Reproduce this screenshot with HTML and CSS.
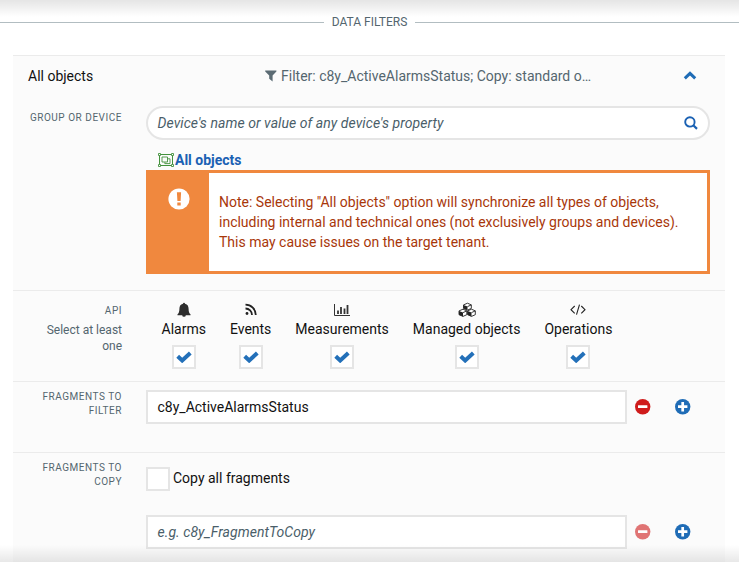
FILE: index.html
```html
<!DOCTYPE html>
<html lang="en">
<head>
<meta charset="utf-8">
<title>Data filters</title>
<link rel="stylesheet" href="styles.css">
</head>
<body>
<svg class="defs" aria-hidden="true">
  <symbol id="check" viewBox="0 0 16 12"><path d="M1.700 5.200L6.200 9.500L14.300 2" fill="none" stroke="#2370b9" stroke-width="4"/></symbol>
  <symbol id="minus" viewBox="0 0 16 16"><circle cx="7.700" cy="7.700" r="7.700" fill="#cf1c1c"/><rect x="3" y="6.200" width="9.400" height="2.900" rx=".4" fill="#fff"/></symbol>
  <symbol id="plus" viewBox="0 0 16 16"><circle cx="7.700" cy="7.700" r="7.700" fill="#1f6cb6"/><path d="M7.700 3v9.400M3 7.700h9.400" stroke="#fff" stroke-width="2.700"/></symbol>
</svg>
<main class="page">
  <h1 class="divider"><span>DATA FILTERS</span></h1>
  <div class="card">
    <section class="group">
      <header class="head">
        <span class="title">All objects</span>
        <svg class="funnel" viewBox="0 0 12 12"><path d="M.2.5H11.4V1.6L7.6 5.6V11.6L4.2 8.8V5.6L.2 1.6Z" fill="#5b6b73"/></svg>
        <span class="summary">Filter: c8y_ActiveAlarmsStatus; Copy: standard o…</span>
        <svg class="chevron" viewBox="0 0 14 9"><path d="M1.800 7.300L7 2.300L12.200 7.300" fill="none" stroke="#1f6cb6" stroke-width="3"/></svg>
      </header>
      <div class="row">
        <div class="label">GROUP OR DEVICE</div>
        <div class="content">
          <div class="search"><span>Device's name or value of any device's property</span>
            <svg viewBox="0 0 14 14"><circle cx="5.900" cy="5.900" r="4.700" fill="none" stroke="#1a61b3" stroke-width="1.900"/><path d="M9.300 9.300L13 12.900" stroke="#1a61b3" stroke-width="2.200"/></svg>
          </div>
          <div class="picked">
            <svg viewBox="0 0 16 14" fill="none" stroke="#43913c"><path d="M2.500 1.500h11M2.500 12.500h11M1.500 2.500v9M14.500 2.500v9"/><path d="M4 4h5.500v5H4zM6.800 9.300v1.300H12V5.800H9.800" stroke-width=".9"/><path d="M.5.5h2v2h-2zM13.500.5h2v2h-2zM.5 11.500h2v2h-2zM13.500 11.500h2v2h-2z" fill="#fff" stroke-width=".9"/></svg>
            <strong>All objects</strong>
          </div>
          <div class="alert">
            <div class="alert-icon"><svg viewBox="0 0 22 22"><circle cx="11" cy="11" r="10.600" fill="#fff"/><path d="M8.900 4.200h4.200l-.5 8.700H9.400zM9.300 14.500h3.400v3H9.300z" fill="#f0883e"/></svg></div>
            <p>Note: Selecting "All objects" option will synchronize all types of objects,<br>including internal and technical ones (not exclusively groups and devices).<br>This may cause issues on the target tenant.</p>
          </div>
        </div>
      </div>
    </section>
    <section class="row api">
      <div class="label">API<p>Select at least one</p></div>
      <div class="apis">
        <div class="item"><svg viewBox="0 0 18 16"><path d="M9 .8a1 1 0 0 1 1 1C12.700 2.300 13.600 4.500 13.600 7c0 2.800.6 4.200 1.900 5.300v.9h-13v-.9C3.800 11.200 4.400 9.800 4.400 7 4.400 4.500 5.300 2.300 8 1.800a1 1 0 0 1 1-1zM7.200 13.200h3.600a1.800 1.600 0 0 1-3.600 0z" fill="#2d2d2d"/></svg><span>Alarms</span><i class="box"><svg><use href="#check"/></svg></i></div>
        <div class="item"><svg viewBox="0 0 18 16"><circle cx="5" cy="11.500" r="1.400" fill="#222"/><path d="M3.500 6.500a6.500 6.500 0 0 1 6.500 6.500M3.500 2.700a10.300 10.300 0 0 1 10.300 10.300" fill="none" stroke="#222" stroke-width="1.800"/></svg><span>Events</span><i class="box"><svg><use href="#check"/></svg></i></div>
        <div class="item"><svg viewBox="0 0 18 16"><path d="M1.500 2v11.500H17" fill="none" stroke="#333"/><path d="M5 8.500v3.500M8 5v7M11.500 6.500v5.500M14.500 3v9" stroke="#333" stroke-width="1.800"/></svg><span>Measurements</span><i class="box"><svg><use href="#check"/></svg></i></div>
        <div class="item"><svg viewBox="0 0 18 16"><g fill="#fff" stroke="#222" stroke-width=".9"><path d="M5.500 2.900L9.500 1.200L13.300 2.900V6.400L9.500 8.100L5.500 6.400Z"/><path d="M1 8.900L5 7.200L8.800 8.900V12.700L5 14.400L1 12.700ZM9.600 8.900L13.500 7.200L17.300 8.900V12.700L13.500 14.400L9.600 12.700Z"/></g><path d="M5.500 2.900L9.500 4.600V8.100L5.500 6.400ZM1 8.900L5 10.600V14.400L1 12.700ZM9.600 8.900L13.500 10.600V14.400L9.600 12.700Z" fill="#222"/><path d="M9.500 4.600L13.300 2.900M5 10.600L8.800 8.900M13.500 10.600L17.300 8.900" stroke="#222" stroke-width=".9"/></svg><span>Managed objects</span><i class="box"><svg><use href="#check"/></svg></i></div>
        <div class="item"><svg viewBox="0 0 18 16"><path d="M5.700 4L2 7.700L5.700 11.400M12.300 4L16 7.700L12.300 11.400M10.500 2.700L7.500 12.700" fill="none" stroke="#222" stroke-width="1.100"/></svg><span>Operations</span><i class="box"><svg><use href="#check"/></svg></i></div>
      </div>
    </section>
    <section class="row filter">
      <div class="label">FRAGMENTS TO FILTER</div>
      <div class="line"><div class="input">c8y_ActiveAlarmsStatus</div><svg class="btn"><use href="#minus"/></svg><svg class="btn"><use href="#plus"/></svg></div>
    </section>
    <section class="row copy">
      <div class="label">FRAGMENTS TO COPY</div>
      <div class="content">
        <div class="option"><i class="box"></i><span>Copy all fragments</span></div>
        <div class="line"><div class="input placeholder">e.g. c8y_FragmentToCopy</div><svg class="btn disabled"><use href="#minus"/></svg><svg class="btn"><use href="#plus"/></svg></div>
      </div>
    </section>
  </div>
</main>
</body>
</html>
```
FILE: styles.css
```css
* { box-sizing: border-box; }
body { margin: 0; background: #fff; color: #111; font: 14px/20px Roboto, "Liberation Sans", sans-serif; }
p, h1 { margin: 0; }
svg { display: block; flex: none; }
.defs { position: absolute; width: 0; height: 0; }
.page { position: relative; height: 562px; overflow: hidden; }
.page::before, .page::after { content: ""; position: absolute; z-index: 2; left: 0; right: 0; height: 17px; pointer-events: none; }
.page::before { top: 0; background: linear-gradient(rgba(0,0,0,.1), rgba(0,0,0,0)); }
.page::after { bottom: 0; background: linear-gradient(rgba(0,0,0,0), rgba(0,0,0,.09)); }
.divider { display: flex; align-items: center; gap: 8px; height: 20px; margin: 12px 0 23px; padding-right: 1px; font-size: 12px; font-weight: 400; color: #54666f; }
.divider::before, .divider::after { content: ""; flex: 1; height: 1px; background: #b2bdc1; }
.divider::after { margin-right: -1px; }
.card { width: 712px; margin-left: 13px; background: #fbfbfb; }
.group, .row.api, .row.filter, .row.copy { border-top: 1px solid #ebebeb; }
.group { height: 235px; }
.head { display: flex; align-items: center; height: 40px; padding-left: 15px; }
.title { width: 237px; }
.funnel { width: 12px; height: 12px; margin-right: 4px; }
.summary { width: 312px; white-space: nowrap; color: #54666f; }
.chevron { width: 14px; height: 9px; margin: -2px 0 0 90px; }
.row { display: grid; grid-template-columns: 109px 564px; column-gap: 24px; }
.label { text-align: right; font-size: 10px; line-height: 14px; letter-spacing: .53px; color: #54666f; padding: 8px 0 0 24px; }
.group .label { padding: 13px 0 0; }
.group .row { padding-top: 2px; }
.group .content { margin-top: 8px; }
.search { display: flex; align-items: center; justify-content: space-between; height: 34px; border: 2px solid #e5e5e5; border-radius: 17px; background: #fff; padding: 0 10px 0 9.5px; font-style: italic; letter-spacing: .06px; color: #4a5e69; }
.search svg { width: 14px; height: 14px; }
.picked { display: flex; align-items: center; gap: 1px; height: 20px; margin: 10px 0 0 12px; color: #1a61b3; }
.picked svg { width: 16px; height: 14px; }
.picked strong { font-weight: 700; }
.alert { display: flex; height: 104px; border: 3px solid #f0883e; background: #fff; color: #a8370a; }
.alert-icon { width: 60px; background: #f0883e; padding: 15px 0 0 18.5px; }
.alert-icon svg { width: 22px; height: 22px; }
.alert p { padding: 19px 0 0 10px; white-space: nowrap; }
.api { height: 91px; }
.api .label { padding: 13px 0 0 20px; }
.label p { margin-top: 4px; font-size: 12px; line-height: 16px; letter-spacing: 0; }
.apis { display: flex; padding: 11px 0 0 3.5px; }
.item { display: flex; flex-direction: column; align-items: center; padding: 0 12px; }
.item > svg { width: 18px; height: 16px; }
.item > span { margin: 1px 0 6px; }
.box { display: grid; place-items: center; width: 24px; height: 24px; border: 2px solid #e5e5e5; background: #fff; }
.box svg { width: 16px; height: 12px; }
.filter { height: 71px; }
.line { display: flex; align-items: center; height: 34px; }
.filter .line { margin-top: 8px; }
.input { width: 481px; height: 34px; border: 2px solid #e5e5e5; background: #fff; padding: 5px 9.5px; }
.placeholder { font-style: italic; letter-spacing: .06px; color: #4a5e69; }
.btn { width: 16px; height: 16px; margin-left: 8px; }
.btn + .btn { margin-left: 24px; }
.disabled { opacity: .6; }
.copy { height: 110px; }
.option { display: flex; align-items: center; gap: 3px; height: 24px; margin: 14px 0 24px; }
.option span { padding-bottom: 2px; }
```
